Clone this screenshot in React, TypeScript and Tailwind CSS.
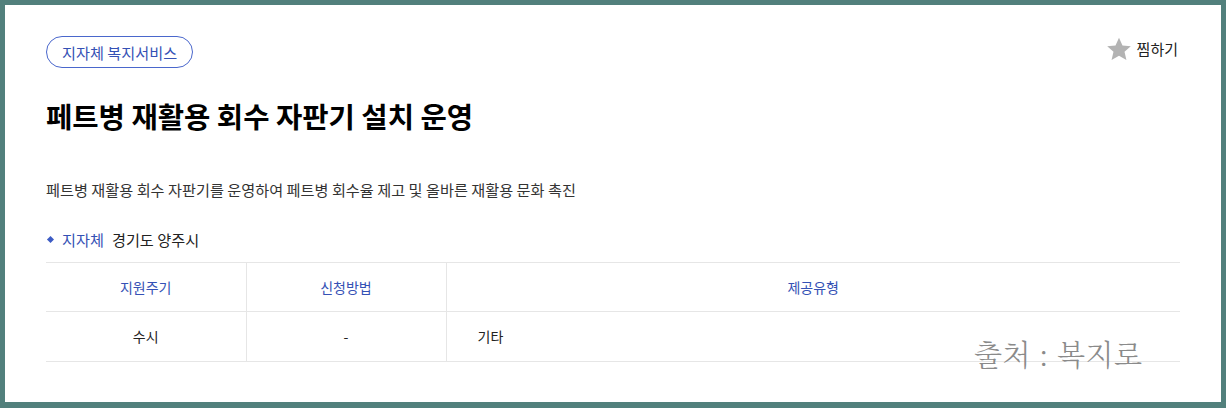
const font = { fontFamily: '"Noto Sans CJK KR", "Noto Sans", sans-serif' };

function Star() {
  return (
    <svg width="28" height="27" viewBox="0 0 24 24" className="text-[#b3b3b3]">
      <path
        fill="currentColor"
        d="M12 1.5l3.1 7 7.4.6-5.6 4.9 1.7 7.4L12 17.5l-6.6 3.9 1.7-7.4L1.5 9.1l7.4-.6z"
      />
    </svg>
  );
}

export default function App() {
  return (
    <div className="w-[1226px] h-[408px] bg-[#52807c] pt-[5px] pl-[5px] pr-[5px] pb-[6px]" style={font}>
      <div className="relative h-full bg-white pl-[41px] pr-[41px] pt-[31px]">
        <div className="flex items-start justify-between">
          <span className="inline-flex h-[32px] items-center rounded-full border border-[#4a67cc] px-[15px] text-[15.2px] text-[#3551b5]">
            지자체 복지서비스
          </span>
          <button className="mr-[2px] flex items-center gap-[4px] text-[15px] text-[#222]">
            <Star />
            찜하기
          </button>
        </div>

        <h1 className="mt-[28px] text-[28.6px] font-bold leading-[40px] text-black">
          페트병 재활용 회수 자판기 설치 운영
        </h1>

        <p className="mt-[42px] text-[15.2px] leading-[22px] text-[#333]">
          페트병 재활용 회수 자판기를 운영하여 페트병 회수율 제고 및 올바른 재활용 문화 촉진
        </p>

        <div className="mt-[28px] flex items-center text-[15.2px] leading-[22px]">
          <span className="mr-[9px] ml-[2px] h-[5px] w-[5px] rotate-45 bg-[#3d5cc4]" />
          <span className="text-[#3551b5]">지자체</span>
          <span className="ml-[8px] text-[#222]">경기도 양주시</span>
        </div>

        <table className="mt-[12px] w-full border-collapse text-[14px]">
          <thead>
            <tr className="h-[49px] border-t border-b border-[#e6e6e6]">
              <th className="w-[200px] border-r border-[#e6e6e6] font-normal text-[#3551b5]">지원주기</th>
              <th className="w-[200px] border-r border-[#e6e6e6] font-normal text-[#3551b5]">신청방법</th>
              <th className="font-normal text-[#3551b5]">제공유형</th>
            </tr>
          </thead>
          <tbody>
            <tr className="h-[50px] border-b border-[#e6e6e6] text-[#222]">
              <td className="border-r border-[#e6e6e6] text-center">수시</td>
              <td className="border-r border-[#e6e6e6] text-center">-</td>
              <td className="pl-[31px]">기타</td>
            </tr>
          </tbody>
        </table>

        <div
          className="absolute left-[969px] top-[327px] text-[29px] font-light tracking-[0.5px] text-[#8a8a8a]"
          style={{ fontFamily: '"Noto Serif CJK KR", "Noto Sans CJK KR", serif' }}
        >
          출처 : 복지로
        </div>
      </div>
    </div>
  );
}
